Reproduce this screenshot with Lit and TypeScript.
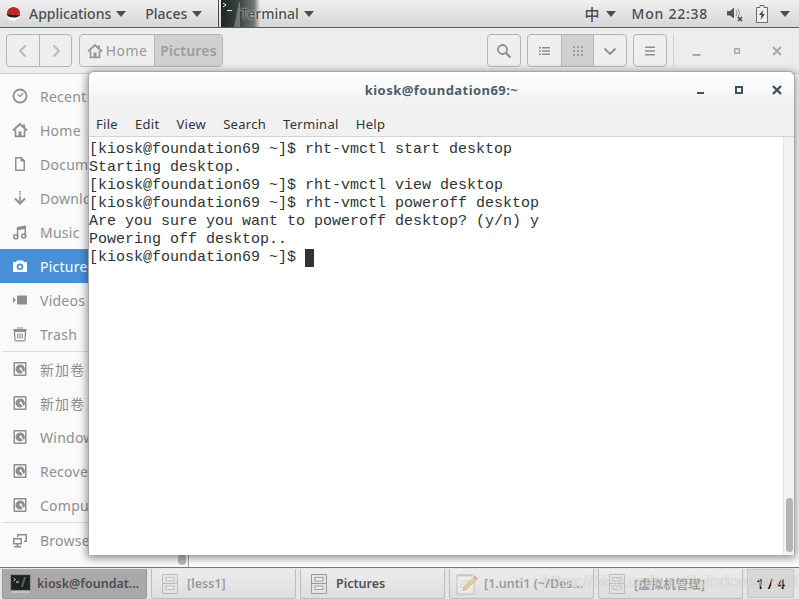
import { LitElement, html, css, svg } from "lit";
import { customElement } from "lit/decorators.js";

const I = (body: unknown, size = 16, vb = "0 0 16 16") =>
  html`<svg class="ico" width=${size} height=${size} viewBox=${vb}>${body}</svg>`;

const caret = html`<svg class="caret" width="10" height="6" viewBox="0 0 10 6"><path d="M0 0h10L5 6z" fill="currentColor"/></svg>`;

const disk = svg`<path fill-rule="evenodd" d="M2.500 1h11a1 1 0 0 1 1 1v12a1 1 0 0 1-1 1h-11a1 1 0 0 1-1-1V2a1 1 0 0 1 1-1zm.5 1.500v11h10v-11z" fill="currentColor"/><path fill-rule="evenodd" d="M8 3.500a4.500 4.500 0 1 0 2.800 8L8.900 8.900a1.200 1.200 0 1 1 .9-.7l2 2.700A4.500 4.500 0 0 0 8 3.500z" fill="currentColor"/>`;
const homeP = svg`<path d="M1 8.500 8 2l7 6.500" fill="none" stroke="currentColor" stroke-width="2"/><path d="M11 2.500h2v3.500l-2-1.500z" fill="currentColor"/><path d="M3.500 8v6.300h9V8" fill="none" stroke="currentColor" stroke-width="1.700"/><rect x="6.500" y="9.500" width="3" height="5" fill="currentColor"/>`;

const sideIcons: Record<string, unknown> = {
  recent: svg`<circle cx="8" cy="8" r="6.500" fill="none" stroke="currentColor" stroke-width="1.800"/><path d="M5.500 6.500 8 8.500 11 5" fill="none" stroke="currentColor" stroke-width="1.200"/>`,
  home: homeP,
  doc: svg`<path fill-rule="evenodd" d="M3 1h6.500L13 4.500V15H3zm1.500 1.500v11h7V5.500H8.500v-3z" fill="currentColor"/>`,
  down: svg`<path d="M7.200 1h1.600v1.500H7.200zM7.200 3.500h1.600V5H7.200zM7.200 6h1.600v7H7.200z" fill="currentColor"/><path d="M3 8.500 8 13.500l5-5" fill="none" stroke="currentColor" stroke-width="2"/>`,
  music: svg`<path d="M4.800 3 14 1.500V12h-1.500V5L6.300 6.200V13H4.800z" fill="currentColor"/><circle cx="3.800" cy="12.800" r="2" fill="none" stroke="currentColor" stroke-width="1.600"/><circle cx="11.800" cy="12" r="2" fill="none" stroke="currentColor" stroke-width="1.600"/>`,
  camera: svg`<path fill-rule="evenodd" d="M5 2.500h6L12 4h3v10H1V4h3zM8 5.500a3.300 3.300 0 1 0 0 6.600 3.300 3.300 0 0 0 0-6.600zm0 1.700a1.600 1.600 0 1 1 0 3.200 1.600 1.600 0 0 1 0-3.200z" fill="currentColor"/>`,
  video: svg`<path d="M5 3.500h10v9H5zM1 5l3 3-3 3z" fill="currentColor"/>`,
  trash: svg`<path d="M5 2.500h6V1.500H5zM1.500 3h13v2h-13z" fill="currentColor"/><path d="M2.500 5.500h11l-.5 8.300a1 1 0 0 1-1 1H4a1 1 0 0 1-1-1z M6 7.500q-1 2.500 0 5M8 7.500v5M10 7.500q1 2.500 0 5" fill="none" stroke="currentColor" stroke-width="1.200"/>`,
  disk,
  net: svg`<path d="M5 2h10v8H12V8.500h1.500V3.500H6.500V5H5z" fill="currentColor"/><path fill-rule="evenodd" d="M1 6h9v6.500H6.500V14H9v1.500H2V14h2.500v-1.500H1zm1.500 1.500V11h6V7.500z" fill="currentColor"/>`,
};

const places1 = [
  ["recent", "Recent"], ["home", "Home"], ["doc", "Documents"], ["down", "Downloads"],
  ["music", "Music"], ["camera", "Pictures"], ["video", "Videos"], ["trash", "Trash"],
];
const places2 = [
  ["disk", "新加卷"], ["disk", "新加卷"], ["disk", "Windows"], ["disk", "Recovery"], ["disk", "Computer"],
];

const termLines = [
  "[kiosk@foundation69 ~]$ rht-vmctl start desktop",
  "Starting desktop.",
  "[kiosk@foundation69 ~]$ rht-vmctl view desktop",
  "[kiosk@foundation69 ~]$ rht-vmctl poweroff desktop",
  "Are you sure you want to poweroff desktop? (y/n) y",
  "Powering off desktop..",
];

const termIcon = html`<svg class="ti" width="21" height="20" viewBox="0 0 21 20"><rect x=".5" y=".5" width="20" height="16" rx="1" fill="#2b2e2e" stroke="#8d8f8c"/><rect x="2" y="2" width="17" height="13" fill="#1c2322"/><path d="M3.500 4l2 1.500-2 1.500" fill="none" stroke="#eee" stroke-width=".8"/><path d="M6 8h3" stroke="#eee"/><path d="M11 13l3-10h2l-3 10z" fill="#5b6462"/><rect x="1" y="17" width="19" height="2" fill="#c4c4c4"/></svg>`;

const cabinet = html`<svg class="ti" width="18" height="22" viewBox="0 0 18 22"><path d="M1.500 1.500h15v19h-15z" fill="#e4e4e0" stroke="#9a9a96"/><path d="M1.500 10.500h15" stroke="#9a9a96"/><rect x="5" y="4.500" width="8" height="3.500" fill="#f2f2ee" stroke="#8b8b87" stroke-width=".8"/><rect x="5" y="13" width="8" height="3.500" fill="#f2f2ee" stroke="#8b8b87" stroke-width=".8"/></svg>`;

const pencil = html`<svg class="ti" width="22" height="22" viewBox="0 0 22 22"><rect x="1" y="2" width="17" height="19" fill="#f1f1ec" stroke="#a5a5a0"/><path d="M3 1.500v2M5 1.500v2M7 1.500v2M9 1.500v2M11 1.500v2M13 1.500v2M15 1.500v2" stroke="#888"/><path d="M4 8h11M4 11h9M4 14h6" stroke="#c4c4c0"/><path d="M19 3l2.500 2.500-11 11-3.500 1 1-3.500z" fill="#e9b668" stroke="#b27c36" stroke-width=".7"/><path d="M19 3l2.500 2.500-1.500 1.500L17.500 4.500z" fill="#e4756e"/></svg>`;

@customElement("app-root")
export class AppRoot extends LitElement {
  static styles = css`
    :host {
      display: block;
      width: 799px;
      height: 599px;
      overflow: hidden;
      position: relative;
      font-family: "Noto Sans", "Noto Sans CJK SC", sans-serif;
      background: #ededed;
    }
    .screen { display: flex; flex-direction: column; height: 599px; }
    .ico, .caret, .ti { display: block; flex: none; }

    /* top panel */
    .panel {
      height: 28px; flex: none; box-sizing: border-box; display: flex; align-items: center;
      background: linear-gradient(#f0f0f0, #d6d6d6);
      border-bottom: 1px solid #555b5c;
      color: #4a4e50; font-size: 14px; font-weight: 500;
    }
    .logo { margin-left: 6px; margin-right: 8px; }
    .pmenu { display: flex; align-items: center; gap: 5px; }
    .places { margin-left: 19px; }
    .divider { width: 1px; height: 27px; background: #4c4c4c; margin-left: 16px; margin-right: 2px; }
    .task {
      display: flex; align-items: center; height: 27px; width: 95px;
      background: linear-gradient(90deg, #1f2725 0, #39423f 45%, #6f7775 85%, rgba(111,119,117,0) 100%) 0 0 / 39px 100% no-repeat;
    }
    .task .thumb { width: 19px; height: 27px; flex: none; }
    .task span { color: #4a4e50; text-shadow: 0 0 2px #fff; }
    .spacer { flex: 1; }
    .tray { display: flex; align-items: center; font-size: 14px; letter-spacing: .75px; margin-right: 9px; }
    .tray .ime { font-size: 15px; margin-right: 6px; letter-spacing: 0; }
    .tray .clock { margin-left: 16px; margin-right: 18px; }
    .tray .vol { margin-right: 12px; }
    .tray .bat { margin-right: 12px; }

    /* file manager */
    .files { flex: 1; min-height: 0; display: flex; flex-direction: column; background: #fff; }
    .hbar {
      height: 46px; flex: none; padding: 6px 2px 0 6px; box-sizing: border-box; display: flex;
      background: #ededed; border-bottom: 1px solid #cfcfcf;
    }
    .group {
      display: flex; height: 33px; border: 1px solid #b5b5b5; border-radius: 4px; box-sizing: border-box;
      background: #efefef; overflow: hidden; color: #a3a3a3;
    }
    .group.strong { color: #8f8f8f; }
    .group > div { display: flex; align-items: center; justify-content: center; box-sizing: border-box; }
    .group > div + div { border-left: 1px solid #b5b5b5; }
    .w33 { width: 32px; }
    .w3 { width: 32.667px; }
    .path { margin-left: 7px; font-size: 14px; letter-spacing: .4px; color: #9d9d9d; }
    .crumb-home { width: 74px; gap: 3px; color: #989898; }
    .crumb-pic { width: 68px; background: #d0d0d0; font-weight: 600; letter-spacing: .2px; color: #9d9d9d; }
    .active { background: #d0d0d0; }
    .sep { width: 1px; height: 33px; background: #d2d2d2; margin: 0 3px 0 6px; }
    .wctl { width: 40px; height: 33px; display: flex; align-items: center; justify-content: center; color: #a8a8a8; }
    .ml6 { margin-left: 6px; }

    .fbody { flex: 1; min-height: 0; display: flex; }
    .side {
      width: 189px; flex: none; box-sizing: border-box; border-right: 1px solid #a6a6a6;
      background: #fafafa; padding-top: 5px; position: relative; overflow: hidden;
    }
    .row {
      height: 34px; display: flex; align-items: center; padding-left: 12px; gap: 12px;
      color: #8e8f90; font-size: 14px; letter-spacing: .25px; white-space: nowrap;
    }
    .row.cjk { letter-spacing: 1px; }
    .row.sel { background: #4a90d9; color: #fff; }
    .hr { height: 1px; background: #dcdcdc; margin: 0 2px; }
    .grip { position: absolute; right: 2px; bottom: 2px; width: 8px; height: 11px; border-radius: 4px; background: #bcbcbc; }
    .main { flex: 1; background: #fff; }

    /* taskbar */
    .taskbar {
      height: 32px; flex: none; box-sizing: border-box; display: flex; gap: 4px; padding: 1px 2px 0;
      border-top: 1px solid #767676; background: #e6e6e6; color: #505050;
      font-size: 12.500px; font-weight: 600;
    }
    .item {
      width: 145px; height: 30px; flex: none; box-sizing: border-box; display: flex; align-items: center; gap: 8px;
      padding-left: 9px; border: 1px solid #bdbdbd; border-top: none; border-radius: 0 0 3px 3px;
      background: linear-gradient(#ececec, #dedede); white-space: nowrap; overflow: hidden;
    }
    .item.cur { background: #a9a9a9; border-color: #999; color: #4d4d4d; gap: 6px; padding-left: 7px; }
    .item.dim { color: #9c9c9c; }
    .item.dim svg { opacity: .55; }
    .item.edit { gap: 6px; padding-left: 6px; }
    .pager {
      width: 47px; height: 29px; box-sizing: border-box; background: #d9d9d9; border: 1px solid #c6c6c6;
      display: flex; align-items: center; justify-content: center; color: #111; font-size: 14px;
    }

    /* terminal window: floats over the file manager */
    .term {
      position: absolute; left: 88px; top: 71px; width: 707px; height: 484px; background: #fff;
      display: flex; flex-direction: column; box-sizing: border-box;
      border-radius: 6px 6px 0 0; box-shadow: 0 2px 8px 1px rgba(0,0,0,.45);
      border: 1px solid #a8a8a8; border-bottom: none;
    }
    .ttitle {
      height: 37px; flex: none; box-sizing: border-box; padding-bottom: 2px; position: relative; display: flex; align-items: center; justify-content: center;
      background: linear-gradient(#fff, #f1f1f1 90%);
      border-radius: 6px 6px 0 0;
      color: #4f5d66; font-size: 13px; font-weight: 700; letter-spacing: .45px;
    }
    .tctl { position: absolute; right: -2px; top: 0; height: 36px; display: flex; color: #3f535e; }
    .tctl div { width: 38px; display: flex; align-items: center; justify-content: center; }
    .tmenu {
      height: 28px; flex: none; box-sizing: border-box; display: flex; gap: 17px; padding: 3px 0 0 7px; align-items: center;
      background: #f1f1f1; border-bottom: 1px solid #d4d4d4; color: #2e3436; font-size: 13px; letter-spacing: .3px;
    }
    .tbody { flex: 1; min-height: 0; display: flex; }
    pre {
      flex: 1; margin: 0; padding: 4px 0 0 0; font: 15px/18px "Liberation Mono", monospace; color: #2e3436;
    }
    .cursor { display: inline-block; width: 9px; height: 18px; background: #2e3436; vertical-align: top; }
    .sbar { width: 11px; flex: none; background: #f2f2f2; border-left: 1px solid #e3e3e3; box-sizing: border-box; position: relative; }
    .thumb-v { position: absolute; left: 2px; right: 1px; bottom: 3px; height: 54px; border-radius: 4px; background: #b4b4b4; }

    .mark {
      position: absolute; left: 543px; top: 571px; color: rgba(255,255,255,.68); font: 16.500px/20px "Liberation Sans", sans-serif;
      text-shadow: 0 0 1px rgba(0,0,0,.3);
      white-space: nowrap; pointer-events: none;
    }
  `;

  private rowT(r: string[], sel = false) {
    const cjk = r[1] === "新加卷";
    return html`<div class="row ${sel ? "sel" : ""} ${cjk ? "cjk" : ""}">${I(sideIcons[r[0]])}<span>${r[1]}</span></div>`;
  }

  render() {
    return html`
      <div class="screen">
        <div class="panel">
          <svg class="logo" width="15" height="15" viewBox="0 0 17 17">
            <ellipse cx="8.500" cy="8.500" rx="8" ry="8" fill="#fff"/>
            <path d="M1 8.500a7.500 7.500 0 0 1 15 0c0 1.500-2 2-7.500 1.500C4 9.800 1 9.500 1 8.500z" fill="#c9232a"/>
            <path d="M0.500 9c1 2.800 4 4 8 4s7-1 8-3.500c-2 1-5 1-8 .5S2 9 .5 9z" fill="#222"/>
          </svg>
          <div class="pmenu">Applications ${caret}</div>
          <div class="pmenu places">Places ${caret}</div>
          <div class="divider"></div>
          <div class="task">
            <svg class="thumb" viewBox="0 0 19 27"><path d="M2 3l3 2-3 2" fill="none" stroke="#f0f0f0"/><path d="M6 10.500h5" stroke="#f0f0f0"/><path d="M13 27 18 2h1v25z" fill="#a6acaa" opacity=".5"/></svg>
            <div class="pmenu"><span>Terminal</span> ${caret}</div>
          </div>
          <div class="spacer"></div>
          <div class="tray">
            <span class="ime">中</span>${caret}
            <span class="clock">Mon 22:38</span>
            <svg class="vol" width="18" height="17" viewBox="0 0 18 17"><path d="M1 6h3l4-3.500v11L4 10.500H1z" fill="#555"/><path d="M10 5q2 3 0 6M12 3.500q3 4.500 0 9" fill="none" stroke="#9a9a9a"/><path d="M12 12l4 4m0-4l-4 4" stroke="#444" stroke-width="1.500"/></svg>
            <svg class="bat" width="12" height="18" viewBox="0 0 12 18"><path d="M4 .5h4v2h3.500v15H.500v-15H4z" fill="#f0f0f0" stroke="#6a6a6a"/><path d="M7 5 3 10h2.500L4.500 15 9 9H6.500z" fill="#444"/></svg>
            ${caret}
          </div>
        </div>

        <div class="files">
          <div class="hbar">
            <div class="group">
              <div class="w33">${I(svg`<path d="M10.500 2.500 5 8l5.500 5.500" fill="none" stroke="currentColor" stroke-opacity=".7" stroke-width="1.800"/>`)}</div>
              <div class="w33">${I(svg`<path d="M5.500 2.500 11 8l-5.500 5.500" fill="none" stroke="currentColor" stroke-opacity=".7" stroke-width="1.800"/>`)}</div>
            </div>
            <div class="group path">
              <div class="crumb-home">${I(homeP)}<span>Home</span></div>
              <div class="crumb-pic">Pictures</div>
            </div>
            <div class="spacer"></div>
            <div class="group strong"><div class="w33">${I(svg`<circle cx="6.500" cy="6.500" r="4.500" fill="none" stroke="currentColor" stroke-width="1.800"/><path d="M10 10l4.500 4.500" stroke="currentColor" stroke-width="2.200"/>`)}</div></div>
            <div class="group strong ml6">
              <div class="w3">${I(svg`<path d="M3 4h2v1.500H3zM6 4h8v1.500H6zM3 7.300h2v1.500H3zM6 7.300h8v1.500H6zM3 10.600h2v1.500H3zM6 10.600h8v1.500H6z" fill="currentColor"/>`)}</div>
              <div class="w3 active">${I(svg`<path d="M3 3h2v2H3zM7 3h2v2H7zM11 3h2v2h-2zM3 7h2v2H3zM7 7h2v2H7zM11 7h2v2h-2zM3 11h2v2H3zM7 11h2v2H7zM11 11h2v2h-2z" fill="currentColor" opacity=".8"/>`)}</div>
              <div class="w3">${I(svg`<path d="M2.500 5.500 8 11l5.500-5.500" fill="none" stroke="currentColor" stroke-width="1.800"/>`)}</div>
            </div>
            <div class="group strong ml6"><div class="w33">${I(svg`<path d="M3 3.500h10V5H3zM3 7.300h10v1.500H3zM3 11h10v1.500H3z" fill="currentColor"/>`)}</div></div>
            <div class="sep"></div>
            <div class="wctl">${I(svg`<rect x="3.500" y="11" width="8" height="2" fill="currentColor"/>`)}</div>
            <div class="wctl">${I(svg`<path fill-rule="evenodd" d="M5 5h6v6H5zm1.500 1.500v3h3v-3z" fill="currentColor"/>`)}</div>
            <div class="wctl">${I(svg`<path d="M4 4l8 8m0-8l-8 8" stroke="currentColor" stroke-width="2"/>`)}</div>
          </div>
          <div class="fbody">
            <div class="side">
              ${places1.map((r) => this.rowT(r, r[1] === "Pictures"))}
              <div class="hr"></div>
              ${places2.map((r) => this.rowT(r))}
              <div class="hr"></div>
              ${this.rowT(["net", "Browse Network"])}
              <div class="grip"></div>
            </div>
            <div class="main"></div>
          </div>
        </div>

        <div class="taskbar">
          <div class="item cur">${termIcon}<span>kiosk@foundat...</span></div>
          <div class="item dim">${cabinet}<span>[less1]</span></div>
          <div class="item">${cabinet}<span>Pictures</span></div>
          <div class="item dim edit">${pencil}<span>[1.unti1 (~/Des...</span></div>
          <div class="item dim">${cabinet}<span>[虚拟机管理]</span></div>
          <div class="pager">1 / 4</div>
        </div>
      </div>

      <div class="term">
        <div class="ttitle">
          kiosk@foundation69:~
          <div class="tctl">
            <div>${I(svg`<rect x="4" y="10" width="7" height="2" fill="currentColor"/>`)}</div>
            <div>${I(svg`<path fill-rule="evenodd" d="M4 4h8v8H4zm2 2v4h4V6z" fill="currentColor"/>`)}</div>
            <div>${I(svg`<path d="M4 4l8 8m0-8l-8 8" stroke="currentColor" stroke-width="2.400"/>`)}</div>
          </div>
        </div>
        <div class="tmenu">
          <span>File</span><span>Edit</span><span>View</span><span>Search</span><span>Terminal</span><span>Help</span>
        </div>
        <div class="tbody">
          <pre>${termLines.join("\n")}
[kiosk@foundation69 ~]$ <span class="cursor"></span></pre>
          <div class="sbar"><div class="thumb-v"></div></div>
        </div>
      </div>

      <div class="mark">https://blog.csdn.net/windowsworld</div>
    `;
  }
}
